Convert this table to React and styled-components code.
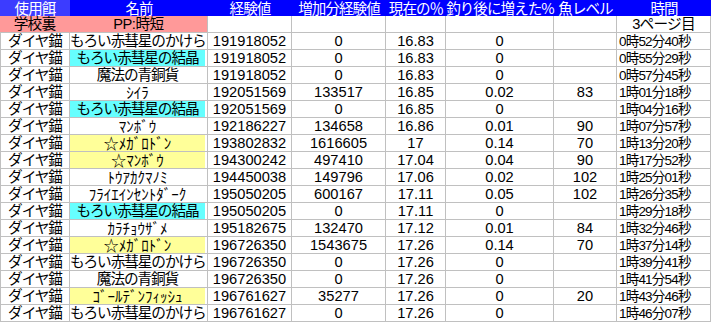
import styled, { createGlobalStyle } from 'styled-components';

const GlobalStyle = createGlobalStyle`
  body {
    margin: 0;
    background: #ffffff;
  }
`

const COLUMNS = '70px 138px 84px 94px 60px 108px 63px 94px';

const fills = {
  cyan: '#66ffff',
  yellow: '#ffff99',
  pink: '#ff9999',
};

const Sheet = styled.div`
  width: 711px;
  font-family: "Liberation Sans", "Noto Sans CJK JP", sans-serif;
  font-size: 14.67px;
  color: #000000;
`

const HeaderRow = styled.div`
  display: grid;
  grid-template-columns: ${COLUMNS};
  height: 16px;
  background: #0000ff;
`

const HeaderCell = styled.div`
  display: flex;
  align-items: center;
  justify-content: center;
  height: 16px;
  color: #ffffff;
  white-space: nowrap;
  letter-spacing: -0.9px;
  font-size: 14.5px;
  line-height: 16px;
  font-family: "Noto Sans CJK JP", "Liberation Sans", sans-serif;
  background: ${p => (p.$light ? '#3c3cff' : 'transparent')};
`

const Row = styled.div`
  display: grid;
  grid-template-columns: ${COLUMNS};
  height: 17px;
`

const Cell = styled.div`
  box-sizing: border-box;
  display: flex;
  align-items: center;
  justify-content: ${p => (p.$left ? 'flex-start' : 'center')};
  padding-left: ${p => (p.$left ? '2px' : '0')};
  border-right: 1px solid ${p => (p.$noRight ? 'transparent' : '#c0c0c0')};
  border-bottom: 1px solid #c0c0c0;
  border-left: ${p => (p.$first ? '1px solid #c0c0c0' : 'none')};
  background: ${p => (p.$fill ? fills[p.$fill] : '#ffffff')};
  white-space: nowrap;
  line-height: 15px;
  letter-spacing: ${p => p.$tight || '0'};
`

const TimeCell = styled(Cell)`
  font-size: 13.5px;
  letter-spacing: -0.8px;
`

const NameCell = styled.div`
  box-sizing: border-box;
  display: flex;
  align-items: stretch;
  padding: 0 2px 0 0;
  border-right: 1px solid #c0c0c0;
  border-bottom: 1px solid #c0c0c0;
  background: #ffffff;
`

const NameFill = styled.div`
  flex: 1;
  display: flex;
  align-items: center;
  justify-content: center;
  white-space: nowrap;
  line-height: 15px;
  letter-spacing: ${p => (p.$half ? '0' : '-1.1px')};
  font-size: ${p => (p.$half ? '15px' : '14.67px')};
  background: ${p => (p.$fill ? fills[p.$fill] : '#ffffff')};
`

const headers = ['使用餌', '名前', '経験値', '増加分経験値', '現在の％', '釣り後に増えた%', '魚レベル', '時間'];

const rows = [
  ['もろい赤彗星のかけら', null, '191918052', '0', '16.83', '0', '', '0時52分40秒'],
  ['もろい赤彗星の結晶', 'cyan', '191918052', '0', '16.83', '0', '', '0時55分29秒'],
  ['魔法の青銅貨', null, '191918052', '0', '16.83', '0', '', '0時57分45秒'],
  ['ｼｲﾗ', null, '192051569', '133517', '16.85', '0.02', '83', '1時01分18秒'],
  ['もろい赤彗星の結晶', 'cyan', '192051569', '0', '16.85', '0', '', '1時04分16秒'],
  ['ﾏﾝﾎﾞｳ', null, '192186227', '134658', '16.86', '0.01', '90', '1時07分57秒'],
  ['☆ﾒｶﾞﾛﾄﾞﾝ', 'yellow', '193802832', '1616605', '17', '0.14', '70', '1時13分20秒'],
  ['☆ﾏﾝﾎﾞｳ', 'yellow', '194300242', '497410', '17.04', '0.04', '90', '1時17分52秒'],
  ['ﾄｳｱｶｸﾏﾉﾐ', null, '194450038', '149796', '17.06', '0.02', '102', '1時25分01秒'],
  ['ﾌﾗｲｴｲﾝｾﾝﾄﾀﾞｰｸ', null, '195050205', '600167', '17.11', '0.05', '102', '1時26分35秒'],
  ['もろい赤彗星の結晶', 'cyan', '195050205', '0', '17.11', '0', '', '1時29分18秒'],
  ['ｶﾗﾁｮｳｻﾞﾒ', null, '195182675', '132470', '17.12', '0.01', '84', '1時32分46秒'],
  ['☆ﾒｶﾞﾛﾄﾞﾝ', 'yellow', '196726350', '1543675', '17.26', '0.14', '70', '1時37分14秒'],
  ['もろい赤彗星のかけら', null, '196726350', '0', '17.26', '0', '', '1時39分41秒'],
  ['魔法の青銅貨', null, '196726350', '0', '17.26', '0', '', '1時41分54秒'],
  ['ｺﾞｰﾙﾃﾞﾝﾌｨｯｼｭ', 'yellow', '196761627', '35277', '17.26', '0', '20', '1時43分46秒'],
  ['もろい赤彗星のかけら', null, '196761627', '0', '17.26', '0', '', '1時46分07秒'],
];

// half-width katakana names are narrower, so they get their own spacing
const isHalfWidth = s => /[\uFF61-\uFF9F]/.test(s);

function DataRow({ row }) {
  const [name, fill, exp, gain, pct, after, level, time] = row;
  return (
    <Row>
      <Cell $first $tight="-1.1px">ダイヤ錨</Cell>
      <NameCell>
        <NameFill $fill={fill} $half={isHalfWidth(name)}>{name}</NameFill>
      </NameCell>
      <Cell>{exp}</Cell>
      <Cell>{gain}</Cell>
      <Cell>{pct}</Cell>
      <Cell>{after}</Cell>
      <Cell>{level}</Cell>
      <TimeCell $left>{time}</TimeCell>
    </Row>
  );
}

export default function App() {
  return (
    <Sheet>
      <GlobalStyle />
      <HeaderRow>
        {headers.map((h, i) => (
          <HeaderCell key={h} $light={i === 0}>{h}</HeaderCell>
        ))}
      </HeaderRow>
      <Row>
        <Cell $fill="pink" $noRight $tight="-0.8px">学校裏</Cell>
        <Cell $fill="pink" $tight="-0.5px">PP:時短</Cell>
        <Cell />
        <Cell />
        <Cell />
        <Cell />
        <Cell />
        <Cell $tight="-0.8px">3ページ目</Cell>
      </Row>
      {rows.map((r, i) => (
        <DataRow key={i} row={r} />
      ))}
    </Sheet>
  );
}
